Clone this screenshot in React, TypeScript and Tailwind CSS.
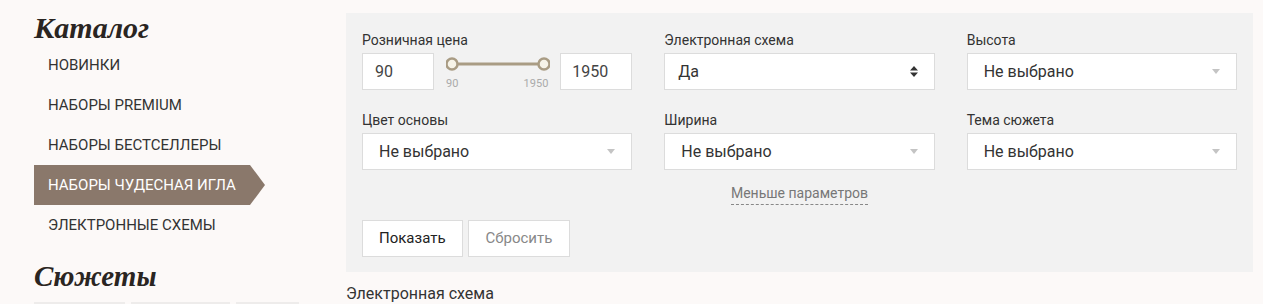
const sans = { fontFamily: "Roboto, 'Liberation Sans', sans-serif" };

const menu = [
  "Новинки",
  "Наборы Premium",
  "Наборы бестселлеры",
  "Наборы Чудесная игла",
  "Электронные схемы",
];

function Caret() {
  return (
    <svg width="8" height="5" viewBox="0 0 8 5" className="shrink-0">
      <path d="M0 0h8L4 5z" fill="#c4c4c4" />
    </svg>
  );
}

function UpDown() {
  return (
    <svg width="8" height="11" viewBox="0 0 8 11" className="shrink-0">
      <path d="M0 4.5L4 0l4 4.5z M0 6.5h8L4 11z" fill="#333" />
    </svg>
  );
}

function Select({ label, value, native }: { label: string; value: string; native?: boolean }) {
  return (
    <div>
      <div className="h-4 text-[14px] leading-4 text-[#333] mb-[5px]">{label}</div>
      <div className="h-[37px] bg-white border border-[#dcdcdc] flex items-center justify-between pl-[13px] pr-[16px]">
        <span className="text-[16px] text-[#333]" style={native ? undefined : { paddingLeft: 3 }}>
          {value}
        </span>
        {native ? <UpDown /> : <Caret />}
      </div>
    </div>
  );
}

function PriceRange() {
  return (
    <div>
      <div className="h-4 text-[14px] leading-4 text-[#333] mb-[5px]">Розничная цена</div>
      <div className="flex items-start h-[37px]">
        <div className="w-[72px] h-[37px] bg-white border border-[#dcdcdc] flex items-center pl-[12px] text-[16px] text-[#444]">
          90
        </div>
        <div className="flex-1 relative h-[37px] mx-[12px]">
          <svg width="104" height="20" viewBox="0 0 104 20" className="absolute left-0 top-[1px]">
            <line x1="6" y1="10" x2="98" y2="10" stroke="#a99c84" strokeWidth="3" />
            <circle cx="6" cy="10" r="5.5" fill="#f6f3e8" stroke="#a99c84" strokeWidth="2.5" />
            <circle cx="98" cy="10" r="5.5" fill="#f6f3e8" stroke="#a99c84" strokeWidth="2.5" />
          </svg>
          <div className="absolute left-0 right-0 top-[25px] flex justify-between text-[11px] leading-3 text-[#aaa]">
            <span>90</span>
            <span>1950</span>
          </div>
        </div>
        <div className="w-[72px] h-[37px] bg-white border border-[#dcdcdc] flex items-center pl-[11px] text-[16px] text-[#444]">
          1950
        </div>
      </div>
    </div>
  );
}

export default function App() {
  return (
    <div className="w-[1263px] h-[304px] overflow-hidden bg-[#fcf9f8] flex" style={sans}>
      <aside className="w-[346px] pl-[34px] shrink-0">
        <h2
          className="text-[30px] leading-none font-bold italic text-[#2a2522] pt-[13px] h-[45px]"
          style={{ fontFamily: "'Liberation Serif', serif" }}
        >
          Каталог
        </h2>
        <ul>
          {menu.map((m, i) =>
            i === 3 ? (
              <li key={m} className="relative w-[216px] h-[40px] bg-[#8a786b] flex items-center pl-[14px] text-[15px] uppercase text-white">
                {m}
                <span className="absolute right-[-15px] top-0 w-0 h-0 border-y-[20px] border-y-transparent border-l-[15px] border-l-[#8a786b]" />
              </li>
            ) : (
              <li key={m} className="h-[40px] flex items-center pl-[14px] text-[15px] uppercase text-[#333]">
                {m}
              </li>
            )
          )}
        </ul>
        <h2
          className="text-[29px] leading-none font-bold italic text-[#2a2522] pt-[17px] h-[57px]"
          style={{ fontFamily: "'Liberation Serif', serif" }}
        >
          Сюжеты
        </h2>
        <div className="flex gap-[6px]">
          <div className="w-[91px] h-[20px] bg-[#eeeceb]" />
          <div className="w-[99px] h-[20px] bg-[#eeeceb]" />
          <div className="w-[63px] h-[20px] bg-[#eeeceb]" />
        </div>
      </aside>
      <main className="w-[907px] pt-[13px]">
        <div className="bg-[#f2f2f2] pt-[19px] pb-[15px] px-[16px]">
          <div className="grid grid-cols-3 gap-x-[32px] gap-y-[22px]">
            <PriceRange />
            <Select label="Электронная схема" value="Да" native />
            <Select label="Высота" value="Не выбрано" />
            <Select label="Цвет основы" value="Не выбрано" />
            <Select label="Ширина" value="Не выбрано" />
            <Select label="Тема сюжета" value="Не выбрано" />
          </div>
          <div className="flex justify-center mt-[13px]">
            <span className="text-[14px] leading-[20px] text-[#777] border-b border-dashed border-[#888] pb-[1px]">
              Меньше параметров
            </span>
          </div>
          <div className="flex gap-[5px] mt-[15px]">
            <button className="h-[37px] px-[16px] bg-white border border-[#dcdcdc] text-[15px] text-[#222]">
              Показать
            </button>
            <button className="h-[37px] px-[17px] bg-white border border-[#dcdcdc] text-[15px] text-[#888]">
              Сбросить
            </button>
          </div>
        </div>
        <div className="pt-[12px] text-[16px] leading-[20px] text-[#333]">Электронная схема</div>
      </main>
    </div>
  );
}
